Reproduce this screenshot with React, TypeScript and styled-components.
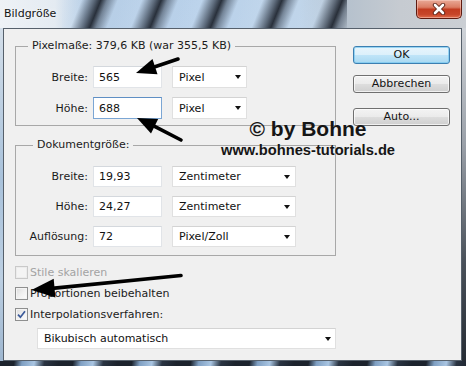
import React from "react";
import styled, { createGlobalStyle } from "styled-components";

const Global = createGlobalStyle`
  html, body { margin: 0; padding: 0; background: #ffffff; overflow: hidden; }
  #root { width: 466px; height: 366px; }
`;

const UI_FONT = `"DejaVu Sans", Verdana, sans-serif`;

const Window = styled.div`
  position: relative;
  width: 466px;
  height: 366px;
  display: flex;
  flex-direction: column;
  font-family: ${UI_FONT};
  font-size: 11px;
  color: #1b1b1b;
  overflow: hidden;
`;

const TitleBar = styled.div`
  height: 28px;
  flex: none;
  display: flex;
  justify-content: space-between;
  align-items: flex-start;
  background:
    repeating-linear-gradient(
        112deg,
        rgba(180, 205, 232, 0) 0px,
        rgba(200, 220, 240, 0.25) 18px,
        rgba(60, 70, 84, 0.75) 30px,
        rgba(28, 34, 44, 0.92) 36px,
        rgba(70, 82, 98, 0.6) 42px,
        rgba(180, 205, 232, 0) 52px,
        rgba(180, 205, 232, 0) 56px
      )
      62px 0 / 285px 100% no-repeat,
    linear-gradient(
      90deg,
      #eef2f6 0px,
      #e4ebf2 55px,
      #b7cee6 85px,
      #b9d1ea 200px,
      #c0d5ea 300px,
      #b5c1cd 345px,
      #c6cbd1 400px,
      #cbcfd4 466px
    );
`;

const Title = styled.span`
  margin: 7px 0 0 4px;
  font-size: 11px;
  line-height: 14px;
  color: #141414;
  text-shadow: 0 0 5px rgba(255, 255, 255, 0.95);
`;

const CloseButton = styled.div`
  width: 46px;
  height: 19px;
  box-sizing: border-box;
  margin-right: 4px;
  border: 1px solid #5e1b10;
  border-top: none;
  border-radius: 0 0 5px 5px;
  background: linear-gradient(#e9a996 0%, #db7d64 40%, #c23c20 52%, #c7462a 80%, #e06d4c 100%);
  box-shadow: inset 0 0 0 1px rgba(255, 220, 210, 0.45);
  display: flex;
  align-items: center;
  justify-content: center;
`;

const Body = styled.div`
  flex: 1;
  display: flex;
  min-height: 0;
`;

const LeftEdge = styled.div`
  width: 3px;
  flex: none;
  background: linear-gradient(#d3dee9, #a9c2db 45%, #bccfe2 75%, #9eb6cf);
`;

const RightEdge = styled.div`
  width: 4px;
  flex: none;
  background: linear-gradient(#cfd3d8, #9aa0a8 35%, #4a515a 70%, #262c34);
`;

const BottomEdge = styled.div`
  height: 5px;
  flex: none;
  background:
    repeating-linear-gradient(
      100deg,
      #1c232d 0px,
      #1c232d 14px,
      #7f9fc2 22px,
      #a9c5e2 34px,
      #2a3442 44px,
      #1c232d 58px
    );
`;

const Client = styled.div`
  position: relative;
  flex: 1;
  box-sizing: border-box;
  border: 1px solid #56606b;
  background: #f0f0f0;
  padding: 10px 11px 0 11px;
  display: flex;
  align-items: flex-start;
`;

const LeftCol = styled.div`
  width: 321px;
  display: flex;
  flex-direction: column;
`;

const RightCol = styled.div`
  width: 97px;
  margin-left: 17px;
  padding-top: 7px;
  display: flex;
  flex-direction: column;
`;

const Group = styled.fieldset<{ $pt: number; $pb: number; $gap: number; $mt?: number }>`
  margin: ${(p) => p.$mt ?? 0}px 0 0 0;
  padding: ${(p) => p.$pt}px 0 ${(p) => p.$pb}px 0;
  border: 1px solid #a8a8a8;
  min-width: 0;
  display: flex;
  flex-direction: column;
  gap: ${(p) => p.$gap}px;
`;

const Legend = styled.legend<{ $offset: number }>`
  margin-left: ${(p) => p.$offset}px;
  padding: 0 4px;
  line-height: 14px;
  font-size: 11px;
  color: #1b1b1b;
`;

const FieldRow = styled.div<{ $h: number }>`
  display: flex;
  align-items: stretch;
  height: ${(p) => p.$h}px;
`;

const FieldLabel = styled.span`
  width: 72px;
  flex: none;
  text-align: right;
  align-self: center;
  white-space: nowrap;
`;

const TextBox = styled.div<{ $focused?: boolean }>`
  width: 69px;
  margin-left: 5px;
  box-sizing: border-box;
  background: #ffffff;
  border: 1px solid ${(p) => (p.$focused ? "#7ba6d4" : "#e1e4e8")};
  border-top-color: ${(p) => (p.$focused ? "#5f8fc4" : "#d4d8dd")};
  padding-left: 5px;
  display: flex;
  align-items: center;
  color: #111;
`;

const Combo = styled.div<{ $w: number; $ml: number }>`
  width: ${(p) => p.$w}px;
  margin-left: ${(p) => p.$ml}px;
  box-sizing: border-box;
  background: #ffffff;
  border: 1px solid #e0e0e0;
  border-top-color: #d3d3d3;
  padding: 0 5px 0 6px;
  display: flex;
  align-items: center;
  justify-content: space-between;
  color: #111;
`;

const ComboArrow = styled.span`
  width: 0;
  height: 0;
  border-left: 3.5px solid transparent;
  border-right: 3.5px solid transparent;
  border-top: 4px solid #111;
`;

const Button = styled.div<{ $default?: boolean; $mt: number }>`
  height: 18px;
  margin-top: ${(p) => p.$mt}px;
  box-sizing: border-box;
  border: 1px solid ${(p) => (p.$default ? "#3c7fb1" : "#707070")};
  border-radius: 3px;
  background: ${(p) =>
    p.$default
      ? "linear-gradient(#e8f5fc 0%, #dcf0fb 48%, #bfe4f8 52%, #a9d9f2 100%)"
      : "linear-gradient(#f3f3f3 0%, #ebebeb 48%, #dddddd 52%, #cfcfcf 100%)"};
  box-shadow: inset 0 0 0 1px ${(p) => (p.$default ? "rgba(120,200,240,0.7)" : "rgba(255,255,255,0.7)")};
  display: flex;
  align-items: center;
  justify-content: center;
  color: #141414;
  line-height: 14px;
`;

const Checks = styled.div`
  margin-top: 10px;
  display: flex;
  flex-direction: column;
  gap: 8px;
`;

const CheckRow = styled.div<{ $disabled?: boolean }>`
  display: flex;
  align-items: center;
  height: 13px;
  gap: 2px;
  color: ${(p) => (p.$disabled ? "#a3a3a3" : "#1b1b1b")};
  white-space: nowrap;
`;

const Box = styled.span<{ $disabled?: boolean }>`
  width: 13px;
  height: 13px;
  box-sizing: border-box;
  flex: none;
  border: 1px solid ${(p) => (p.$disabled ? "#c9c9c9" : "#8e8f8f")};
  background: ${(p) =>
    p.$disabled
      ? "#f4f4f4"
      : "linear-gradient(135deg, #dcdcdc 0%, #f0f0f0 50%, #fdfdfd 100%)"};
  box-shadow: inset 0 0 0 1px ${(p) => (p.$disabled ? "#ececec" : "#f4f4f4")};
  display: flex;
  align-items: center;
  justify-content: center;
`;

const MethodCombo = styled(Combo)`
  height: 21px;
  margin-top: 7px;
  padding-right: 4px;
`;

const Watermark = styled.div`
  position: absolute;
  left: 304px;
  top: 89px;
  transform: translateX(-50%);
  display: flex;
  flex-direction: column;
  align-items: center;
  font-family: "Liberation Sans", Arial, sans-serif;
  font-weight: bold;
  color: #161616;
  white-space: nowrap;
  pointer-events: none;
`;

const WmTitle = styled.span`
  font-size: 21px;
  line-height: 22px;
`;

const WmUrl = styled.span`
  font-size: 14.7px;
  line-height: 17px;
  margin-top: 2px;
`;

const Annotations = styled.svg`
  position: absolute;
  left: 0;
  top: 0;
  width: 466px;
  height: 366px;
  pointer-events: none;
`;

const Arrow = ({ x1, y1, tip, a, b }: { x1: number; y1: number; tip: [number, number]; a: [number, number]; b: [number, number] }) => {
  const mx = (a[0] + b[0]) / 2;
  const my = (a[1] + b[1]) / 2;
  return (
    <g>
      <line x1={x1} y1={y1} x2={mx} y2={my} stroke="#000" strokeWidth={3.6} strokeLinecap="round" />
      <polygon points={`${tip[0]},${tip[1]} ${a[0]},${a[1]} ${b[0]},${b[1]}`} fill="#000" />
    </g>
  );
};

export default function App() {
  return (
    <>
      <Global />
      <Window>
        <TitleBar>
          <Title>Bildgröße</Title>
          <CloseButton>
            <svg width="14" height="12" viewBox="0 0 14 12">
              <path d="M3 2 L11 10 M11 2 L3 10" stroke="#5a2216" strokeWidth="4.4" strokeLinecap="round" />
              <path d="M3 2 L11 10 M11 2 L3 10" stroke="#ffffff" strokeWidth="2.6" strokeLinecap="round" />
            </svg>
          </CloseButton>
        </TitleBar>
        <Body>
          <LeftEdge />
          <Client>
            <LeftCol>
              <Group $pt={13} $pb={6} $gap={9}>
                <Legend $offset={12}>Pixelmaße: 379,6 KB (war 355,5 KB)</Legend>
                <FieldRow $h={22}>
                  <FieldLabel>Breite:</FieldLabel>
                  <TextBox>565</TextBox>
                  <Combo $w={75} $ml={10}>
                    Pixel
                    <ComboArrow />
                  </Combo>
                </FieldRow>
                <FieldRow $h={22}>
                  <FieldLabel>Höhe:</FieldLabel>
                  <TextBox $focused>688</TextBox>
                  <Combo $w={75} $ml={10}>
                    Pixel
                    <ComboArrow />
                  </Combo>
                </FieldRow>
              </Group>
              <Group $pt={14} $pb={8} $gap={9} $mt={12}>
                <Legend $offset={17}>Dokumentgröße:</Legend>
                <FieldRow $h={21}>
                  <FieldLabel>Breite:</FieldLabel>
                  <TextBox>19,93</TextBox>
                  <Combo $w={124} $ml={10}>
                    Zentimeter
                    <ComboArrow />
                  </Combo>
                </FieldRow>
                <FieldRow $h={21}>
                  <FieldLabel>Höhe:</FieldLabel>
                  <TextBox>24,27</TextBox>
                  <Combo $w={124} $ml={10}>
                    Zentimeter
                    <ComboArrow />
                  </Combo>
                </FieldRow>
                <FieldRow $h={21}>
                  <FieldLabel>Auflösung:</FieldLabel>
                  <TextBox>72</TextBox>
                  <Combo $w={124} $ml={10}>
                    Pixel/Zoll
                    <ComboArrow />
                  </Combo>
                </FieldRow>
              </Group>
              <Checks>
                <CheckRow $disabled>
                  <Box $disabled />
                  Stile skalieren
                </CheckRow>
                <CheckRow>
                  <Box />
                  Proportionen beibehalten
                </CheckRow>
                <CheckRow>
                  <Box>
                    <svg width="9" height="9" viewBox="0 0 9 9">
                      <path d="M1 4.6 L3.4 7.2 L8 1.2" fill="none" stroke="#3b5a9a" strokeWidth="1.7" />
                    </svg>
                  </Box>
                  Interpolationsverfahren:
                </CheckRow>
              </Checks>
              <MethodCombo $w={299} $ml={22}>
                Bikubisch automatisch
                <ComboArrow />
              </MethodCombo>
            </LeftCol>
            <RightCol>
              <Button $default $mt={0}>OK</Button>
              <Button $mt={11}>Abbrechen</Button>
              <Button $mt={15}>Auto...</Button>
            </RightCol>
            <Watermark>
              <WmTitle>© by Bohne</WmTitle>
              <WmUrl>www.bohnes-tutorials.de</WmUrl>
            </Watermark>
          </Client>
          <RightEdge />
        </Body>
        <BottomEdge />
        <Annotations viewBox="0 0 466 366">
          <Arrow x1={178} y1={59} tip={[136, 73]} a={[152.5, 59.1]} b={[157.5, 74.3]} />
          <Arrow x1={181} y1={140} tip={[137, 118]} a={[158.2, 119.1]} b={[151, 133.5]} />
          <Arrow x1={181} y1={275.5} tip={[31.5, 290]} a={[53.7, 278.8]} b={[55.4, 297.5]} />
        </Annotations>
      </Window>
    </>
  );
}
